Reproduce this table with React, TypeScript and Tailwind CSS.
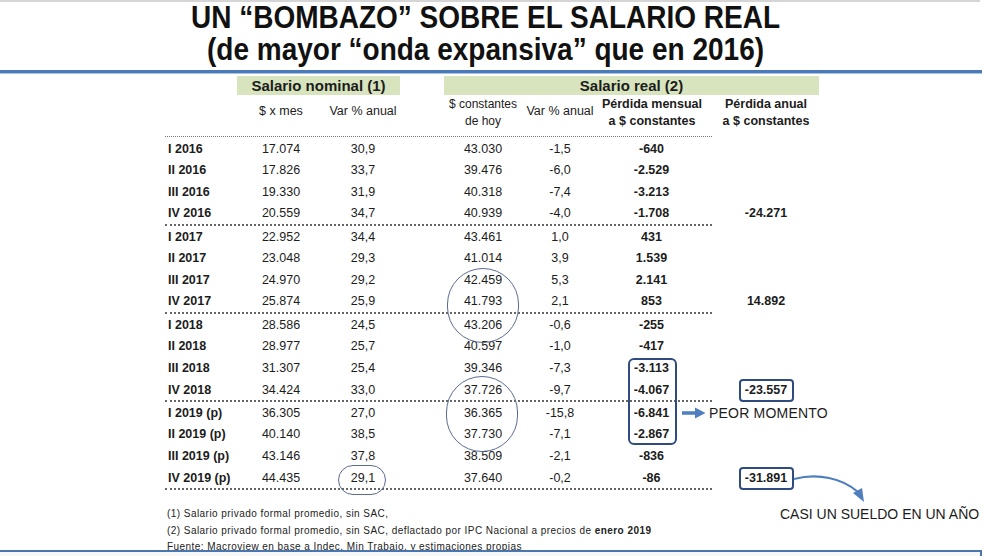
import React from 'react'

type Row = { q: string; nom: string; vn: string; real: string; vr: string; pm: string; pa?: string; boxed?: boolean; peor?: boolean }

const groups: Row[][] = [
  [
    { q: 'I 2016', nom: '17.074', vn: '30,9', real: '43.030', vr: '-1,5', pm: '-640' },
    { q: 'II 2016', nom: '17.826', vn: '33,7', real: '39.476', vr: '-6,0', pm: '-2.529' },
    { q: 'III 2016', nom: '19.330', vn: '31,9', real: '40.318', vr: '-7,4', pm: '-3.213' },
    { q: 'IV 2016', nom: '20.559', vn: '34,7', real: '40.939', vr: '-4,0', pm: '-1.708', pa: '-24.271' },
  ],
  [
    { q: 'I 2017', nom: '22.952', vn: '34,4', real: '43.461', vr: '1,0', pm: '431' },
    { q: 'II 2017', nom: '23.048', vn: '29,3', real: '41.014', vr: '3,9', pm: '1.539' },
    { q: 'III 2017', nom: '24.970', vn: '29,2', real: '42.459', vr: '5,3', pm: '2.141' },
    { q: 'IV 2017', nom: '25.874', vn: '25,9', real: '41.793', vr: '2,1', pm: '853', pa: '14.892' },
  ],
  [
    { q: 'I 2018', nom: '28.586', vn: '24,5', real: '43.206', vr: '-0,6', pm: '-255' },
    { q: 'II 2018', nom: '28.977', vn: '25,7', real: '40.597', vr: '-1,0', pm: '-417' },
    { q: 'III 2018', nom: '31.307', vn: '25,4', real: '39.346', vr: '-7,3', pm: '-3.113' },
    { q: 'IV 2018', nom: '34.424', vn: '33,0', real: '37.726', vr: '-9,7', pm: '-4.067', pa: '-23.557', boxed: true },
  ],
  [
    { q: 'I 2019 (p)', nom: '36.305', vn: '27,0', real: '36.365', vr: '-15,8', pm: '-6.841', peor: true },
    { q: 'II 2019 (p)', nom: '40.140', vn: '38,5', real: '37.730', vr: '-7,1', pm: '-2.867' },
    { q: 'III 2019 (p)', nom: '43.146', vn: '37,8', real: '38.509', vr: '-2,1', pm: '-836' },
    { q: 'IV 2019 (p)', nom: '44.435', vn: '29,1', real: '37.640', vr: '-0,2', pm: '-86', pa: '-31.891', boxed: true },
  ],
]

// label | $ x mes | var | gap | $ const | var | pérdida mensual | gap | pérdida anual
const rowCols = 'grid grid-cols-[75px_82px_82px_39px_80px_74px_85px_30px_108px]'
const headCols = 'grid grid-cols-[75px_82px_82px_39px_80px_74px_110px_5px_108px]'

function TableRow({ r }: { r: Row }) {
  return (
    <div className={`${rowCols} h-[21.5px] items-center text-[12.5px] leading-none`}>
      <div className="pl-[3px] font-bold whitespace-nowrap">{r.q}</div>
      <div className="text-center">{r.nom}</div>
      <div className="text-center">{r.vn}</div>
      <div />
      <div className="text-center">{r.real}</div>
      <div className="text-center">{r.vr}</div>
      <div className="pl-[24px] text-center font-bold">{r.pm}</div>
      <div className="flex items-center">
        {r.peor && (
          <svg width="24" height="12" viewBox="0 0 24 12">
            <path d="M0 4.2 H13 V0.5 L23.5 6 L13 11.5 V7.8 H0 Z" fill="#4f7fbf" />
          </svg>
        )}
      </div>
      <div className="flex items-center">
        {r.peor && <span className="-ml-[3px] text-[14px] whitespace-nowrap tracking-[0.2px]">PEOR MOMENTO</span>}
        {r.pa && !r.boxed && <span className="w-full text-center font-bold">{r.pa}</span>}
        {r.pa && r.boxed && (
          <span className="mx-auto flex h-[23px] w-[55px] items-center justify-center rounded-[4px] border-2 border-[#2e4d7e] font-bold">{r.pa}</span>
        )}
      </div>
    </div>
  )
}

export default function App() {
  return (
    <div className="relative h-[557px] w-[990px] overflow-hidden bg-white text-[#1c1c1c] font-['Liberation_Sans',Arial,sans-serif]">
      <div className="h-[2px] w-[980px] bg-[#d5d5d5]" />
      <h1 className="w-[971px] text-center text-[28px] font-bold leading-[32px] text-[#111]">
        <div className="scale-y-110">UN “BOMBAZO” SOBRE EL SALARIO REAL</div>
        <div className="scale-y-110">(de mayor “onda expansiva” que en 2016)</div>
      </h1>
      <div className="mt-[4px] h-[4px] w-[982px] border-b border-[#a9c3e4] bg-[#4a7bb8]" />

      {/* group headers */}
      <div className="mt-[2px] flex pl-[237px] text-[15px] font-bold leading-[19px]">
        <div className="h-[19px] w-[163px] bg-[#d7e4bd] text-center">Salario nominal (1)</div>
        <div className="ml-[44px] h-[19px] w-[375px] bg-[#d7e4bd] text-center">Salario real (2)</div>
      </div>

      {/* column headers */}
      <div className="pl-[165px]">
        <div className={`${headCols} h-[41px] text-[12.5px] leading-[17px] whitespace-nowrap`}>
          <div />
          <div className="pt-[8px] text-center">$ x mes</div>
          <div className="pt-[8px] text-center">Var % anual</div>
          <div />
          <div className="pt-px text-center text-[12px]">$ constantes<br />de hoy</div>
          <div className="pt-[8px] text-center">Var % anual</div>
          <div className="pt-px text-center font-bold">Pérdida mensual<br />a $ constantes</div>
          <div />
          <div className="pt-px text-center font-bold">Pérdida anual<br />a $ constantes</div>
        </div>
        <div className="w-[547px] border-t border-dotted border-[#777]" />

        <div className="pt-px">
          {groups.map((g, i) => (
            <div key={i}>
              {g.map(r => <TableRow key={r.q} r={r} />)}
              <div className="w-[547px] border-t-2 border-dotted border-[#666]" />
            </div>
          ))}
        </div>
      </div>

      {/* notes */}
      <div className="mt-[16px] flex h-[44px] w-[982px] overflow-hidden pl-[167px]">
        <div className="flex-1 text-[10px] leading-[16.5px] tracking-[0.45px] text-[#222]">
          <div>(1) Salario privado formal promedio, sin SAC,</div>
          <div>(2) Salario privado formal promedio, sin SAC, deflactado por IPC Nacional a precios de <b>enero 2019</b></div>
          <div>Fuente: Macroview en base a Indec, Min Trabajo, y estimaciones propias</div>
        </div>
        <div className="w-[202px] text-[14px] leading-[16.5px] whitespace-nowrap">CASI UN SUELDO EN UN AÑO</div>
      </div>
      <div className="h-[6px] w-[982px] border-r-2 border-t-2 border-[#4a76b0] bg-[#f7f7f7]" />

      {/* highlights drawn over the table */}
      <div className="absolute left-[447px] top-[268px] h-[75px] w-[72px] rounded-full border border-[#5a6b90]" />
      <div className="absolute left-[446px] top-[376px] h-[76px] w-[72px] rounded-full border border-[#5a6b90]" />
      <div className="absolute left-[338px] top-[465px] h-[30px] w-[48px] rounded-full border border-[#5a6b90]" />
      <div className="absolute left-[628px] top-[358px] h-[87px] w-[49px] rounded-[6px] border-2 border-[#2e4d7e]" />
      <svg className="absolute left-[792px] top-[468px]" width="80" height="40" viewBox="0 0 80 40">
        <path d="M2 11 C26 5 50 10 66 24" fill="none" stroke="#4f7fbf" strokeWidth="2.2" />
        <path d="M61 25 L72 34 L70 20 Z" fill="#4f7fbf" />
      </svg>
    </div>
  )
}
